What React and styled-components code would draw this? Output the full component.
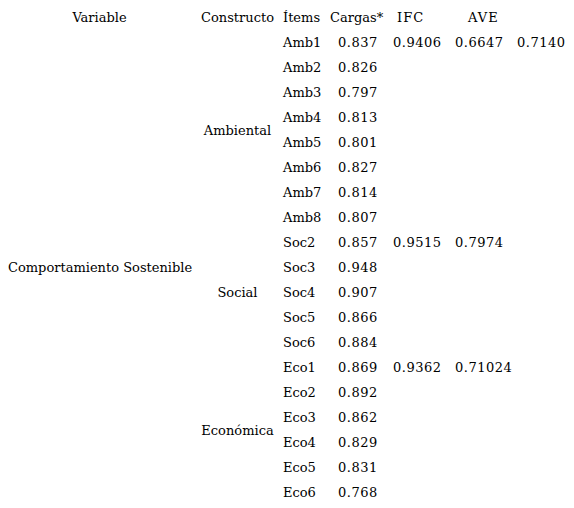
import React from 'react';
import styled, { createGlobalStyle } from 'styled-components';

const GlobalStyle = createGlobalStyle`
  body {
    margin: 0;
    background: #ffffff;
    font-family: "DejaVu Serif", "Liberation Serif", serif;
    color: #000000;
  }
`;

const Table = styled.table`
  border-collapse: collapse;
  table-layout: fixed;
  margin: 5px 0 0 4px;
  font-size: 13px;
  width: 566px;
`;

const Cell = styled.td`
  height: 25px;
  padding: 0 0 0 ${(p) => p.$pad || 0}px;
  text-align: ${(p) => p.$align || 'left'};
  vertical-align: middle;
  white-space: nowrap;
  letter-spacing: ${(p) => p.$spread || 0}px;
`;

const Head = styled(Cell).attrs({ as: 'th' })`
  font-weight: normal;
`;

const widths = [191, 85, 50, 58, 62, 62, 58];

const groups = [
  {
    name: 'Ambiental',
    ifc: '0.9406',
    ave: '0.6647',
    extra: '0.7140',
    items: [
      ['Amb1', '0.837'],
      ['Amb2', '0.826'],
      ['Amb3', '0.797'],
      ['Amb4', '0.813'],
      ['Amb5', '0.801'],
      ['Amb6', '0.827'],
      ['Amb7', '0.814'],
      ['Amb8', '0.807'],
    ],
  },
  {
    name: 'Social',
    ifc: '0.9515',
    ave: '0.7974',
    items: [
      ['Soc2', '0.857'],
      ['Soc3', '0.948'],
      ['Soc4', '0.907'],
      ['Soc5', '0.866'],
      ['Soc6', '0.884'],
    ],
  },
  {
    name: 'Económica',
    ifc: '0.9362',
    ave: '0.71024',
    items: [
      ['Eco1', '0.869'],
      ['Eco2', '0.892'],
      ['Eco3', '0.862'],
      ['Eco4', '0.829'],
      ['Eco5', '0.831'],
      ['Eco6', '0.768'],
    ],
  },
];

const total = groups.reduce((n, g) => n + g.items.length, 0);

export default function App() {
  return (
    <>
      <GlobalStyle />
      <Table>
        <colgroup>
          {widths.map((w, i) => (
            <col key={i} style={{ width: w }} />
          ))}
        </colgroup>
        <thead>
          <tr>
            <Head $align="center">Variable</Head>
            <Head $align="center">Constructo</Head>
            <Head $pad={3}>Ítems</Head>
            <Head>Cargas*</Head>
            <Head $pad={9} $spread={1}>IFC</Head>
            <Head $pad={18} $spread={1}>AVE</Head>
            <Head />
          </tr>
        </thead>
        <tbody>
          {groups.map((g, gi) =>
            g.items.map(([item, load], i) => (
              <tr key={item}>
                {gi === 0 && i === 0 && (
                  <Cell rowSpan={total} $pad={4}>
                    Comportamiento Sostenible
                  </Cell>
                )}
                {i === 0 && (
                  <Cell rowSpan={g.items.length} $align="center">
                    {g.name}
                  </Cell>
                )}
                <Cell $pad={3}>{item}</Cell>
                <Cell $pad={8} $spread={0.5}>{load}</Cell>
                <Cell $pad={5} $spread={0.5}>{i === 0 ? g.ifc : ''}</Cell>
                <Cell $pad={5} $spread={0.5}>{i === 0 ? g.ave : ''}</Cell>
                <Cell $pad={5} $spread={0.5}>{i === 0 && g.extra ? g.extra : ''}</Cell>
              </tr>
            ))
          )}
        </tbody>
      </Table>
    </>
  );
}
